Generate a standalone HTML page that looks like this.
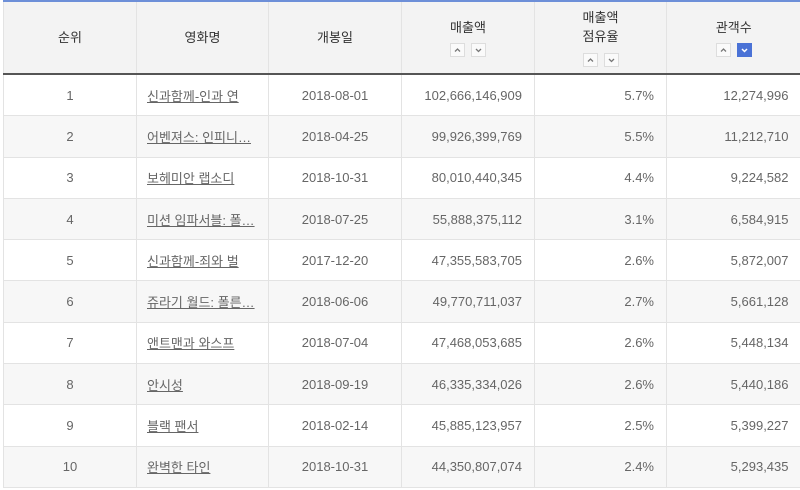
<!DOCTYPE html>
<html><head><meta charset="utf-8"><style>
body{margin:0;background:#fff;font-family:"Liberation Sans","Noto Sans CJK KR",sans-serif;font-size:12.5px;color:#666;}
.wrap{position:absolute;left:3px;top:0;width:797px;}
table{border-collapse:collapse;width:797px;table-layout:fixed;border-top:2px solid #6d8fd8;}
th{background:#f3f3f3;color:#333;font-weight:normal;height:71px;border-left:1px solid #e3e3e3;border-bottom:2px solid #555;padding:0;font-size:13px;line-height:19px;vertical-align:middle;}
td{height:40.3px;border-left:1px solid #e3e3e3;border-bottom:1px solid #e3e3e3;padding:0;font-size:13px;}
tr:nth-child(odd) td{background:#f7f7f7;}
.c{text-align:center}.l{padding-left:10px}.r{text-align:right;padding-right:12px}
a{color:#666;text-decoration:underline;}
.s{display:inline-block;width:13px;height:12px;border:1px solid #ddd;background:#fafafa;margin:5px 3px 0;vertical-align:middle;}
.s svg{display:block}
.s.on{background:#4a72d6;border-color:#4a72d6;}
</style></head><body><div class="wrap"><table>
<colgroup><col style="width:133px"><col style="width:132px"><col style="width:133px"><col style="width:133px"><col style="width:132px"><col style="width:134px"></colgroup>
<tr><th>순위</th><th>영화명</th><th>개봉일</th>
<th>매출액<br><span class="s"><svg width="13" height="12"><path d="M4 7.5L6.5 5L9 7.5" fill="none" stroke="#777" stroke-width="1.3"/></svg></span><span class="s"><svg width="13" height="12"><path d="M4 5L6.5 7.5L9 5" fill="none" stroke="#777" stroke-width="1.3"/></svg></span></th>
<th>매출액<br>점유율<br><span class="s"><svg width="13" height="12"><path d="M4 7.5L6.5 5L9 7.5" fill="none" stroke="#777" stroke-width="1.3"/></svg></span><span class="s"><svg width="13" height="12"><path d="M4 5L6.5 7.5L9 5" fill="none" stroke="#777" stroke-width="1.3"/></svg></span></th>
<th>관객수<br><span class="s"><svg width="13" height="12"><path d="M4 7.5L6.5 5L9 7.5" fill="none" stroke="#777" stroke-width="1.3"/></svg></span><span class="s on"><svg width="13" height="12"><path d="M4 5L6.5 7.5L9 5" fill="none" stroke="#fff" stroke-width="1.5"/></svg></span></th></tr>
<tr><td class="c">1</td><td class="l"><a>신과함께-인과 연</a></td><td class="c">2018-08-01</td><td class="r">102,666,146,909</td><td class="r">5.7%</td><td class="r">12,274,996</td></tr>
<tr><td class="c">2</td><td class="l"><a>어벤져스: 인피니…</a></td><td class="c">2018-04-25</td><td class="r">99,926,399,769</td><td class="r">5.5%</td><td class="r">11,212,710</td></tr>
<tr><td class="c">3</td><td class="l"><a>보헤미안 랩소디</a></td><td class="c">2018-10-31</td><td class="r">80,010,440,345</td><td class="r">4.4%</td><td class="r">9,224,582</td></tr>
<tr><td class="c">4</td><td class="l"><a>미션 임파서블: 폴…</a></td><td class="c">2018-07-25</td><td class="r">55,888,375,112</td><td class="r">3.1%</td><td class="r">6,584,915</td></tr>
<tr><td class="c">5</td><td class="l"><a>신과함께-죄와 벌</a></td><td class="c">2017-12-20</td><td class="r">47,355,583,705</td><td class="r">2.6%</td><td class="r">5,872,007</td></tr>
<tr><td class="c">6</td><td class="l"><a>쥬라기 월드: 폴른…</a></td><td class="c">2018-06-06</td><td class="r">49,770,711,037</td><td class="r">2.7%</td><td class="r">5,661,128</td></tr>
<tr><td class="c">7</td><td class="l"><a>앤트맨과 와스프</a></td><td class="c">2018-07-04</td><td class="r">47,468,053,685</td><td class="r">2.6%</td><td class="r">5,448,134</td></tr>
<tr><td class="c">8</td><td class="l"><a>안시성</a></td><td class="c">2018-09-19</td><td class="r">46,335,334,026</td><td class="r">2.6%</td><td class="r">5,440,186</td></tr>
<tr><td class="c">9</td><td class="l"><a>블랙 팬서</a></td><td class="c">2018-02-14</td><td class="r">45,885,123,957</td><td class="r">2.5%</td><td class="r">5,399,227</td></tr>
<tr><td class="c">10</td><td class="l"><a>완벽한 타인</a></td><td class="c">2018-10-31</td><td class="r">44,350,807,074</td><td class="r">2.4%</td><td class="r">5,293,435</td></tr>
</table></div></body></html>
